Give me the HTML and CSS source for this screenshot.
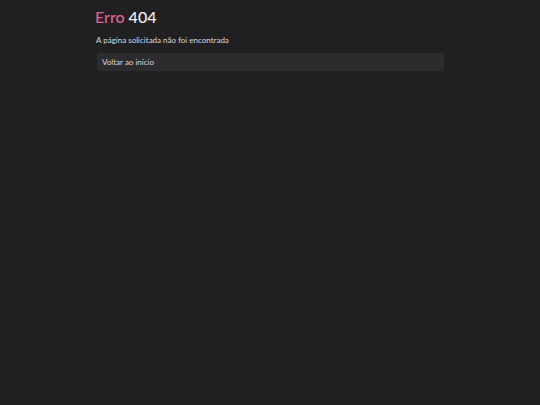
FILE: index.html
```html
<!DOCTYPE html>
<html lang="pt">
<head>
<meta charset="utf-8">
<link rel="stylesheet" href="styles.css">
</head>
<body>
<main class="page">
  <h1 class="title"><span class="accent">Erro</span> 404</h1>
  <p class="message">A página solicitada não foi encontrada</p>
  <a class="back" href="#">Voltar ao início</a>
</main>
</body>
</html>
```
FILE: styles.css
```css
html, body {
  margin: 0;
  padding: 0;
  background: #201f22;
  height: 100%;
}
body {
  font-family: Lato, "Noto Sans", sans-serif;
  color: #e8e6ea;
}
.page {
  width: 348px;
  margin: 0 auto;
  padding-top: 8px;
  display: flex;
  flex-direction: column;
}
.title {
  margin: 0 0 0 -1px;
  font-size: 16px;
  font-weight: 500;
  line-height: 18px;
  color: #f4f2f5;
}
.accent {
  color: #e06390;
}
.message {
  margin: 9px 0 0 0;
  font-size: 8px;
  line-height: 10px;
  color: #dcdadf;
}
.back {
  margin: 8px 0 0 1px;
  display: block;
  background: #2c2b2e;
  border-radius: 2px;
  padding: 0 5px;
  height: 18px;
  line-height: 18px;
  font-size: 8px;
  color: #dcdadf;
  text-decoration: none;
}
```
